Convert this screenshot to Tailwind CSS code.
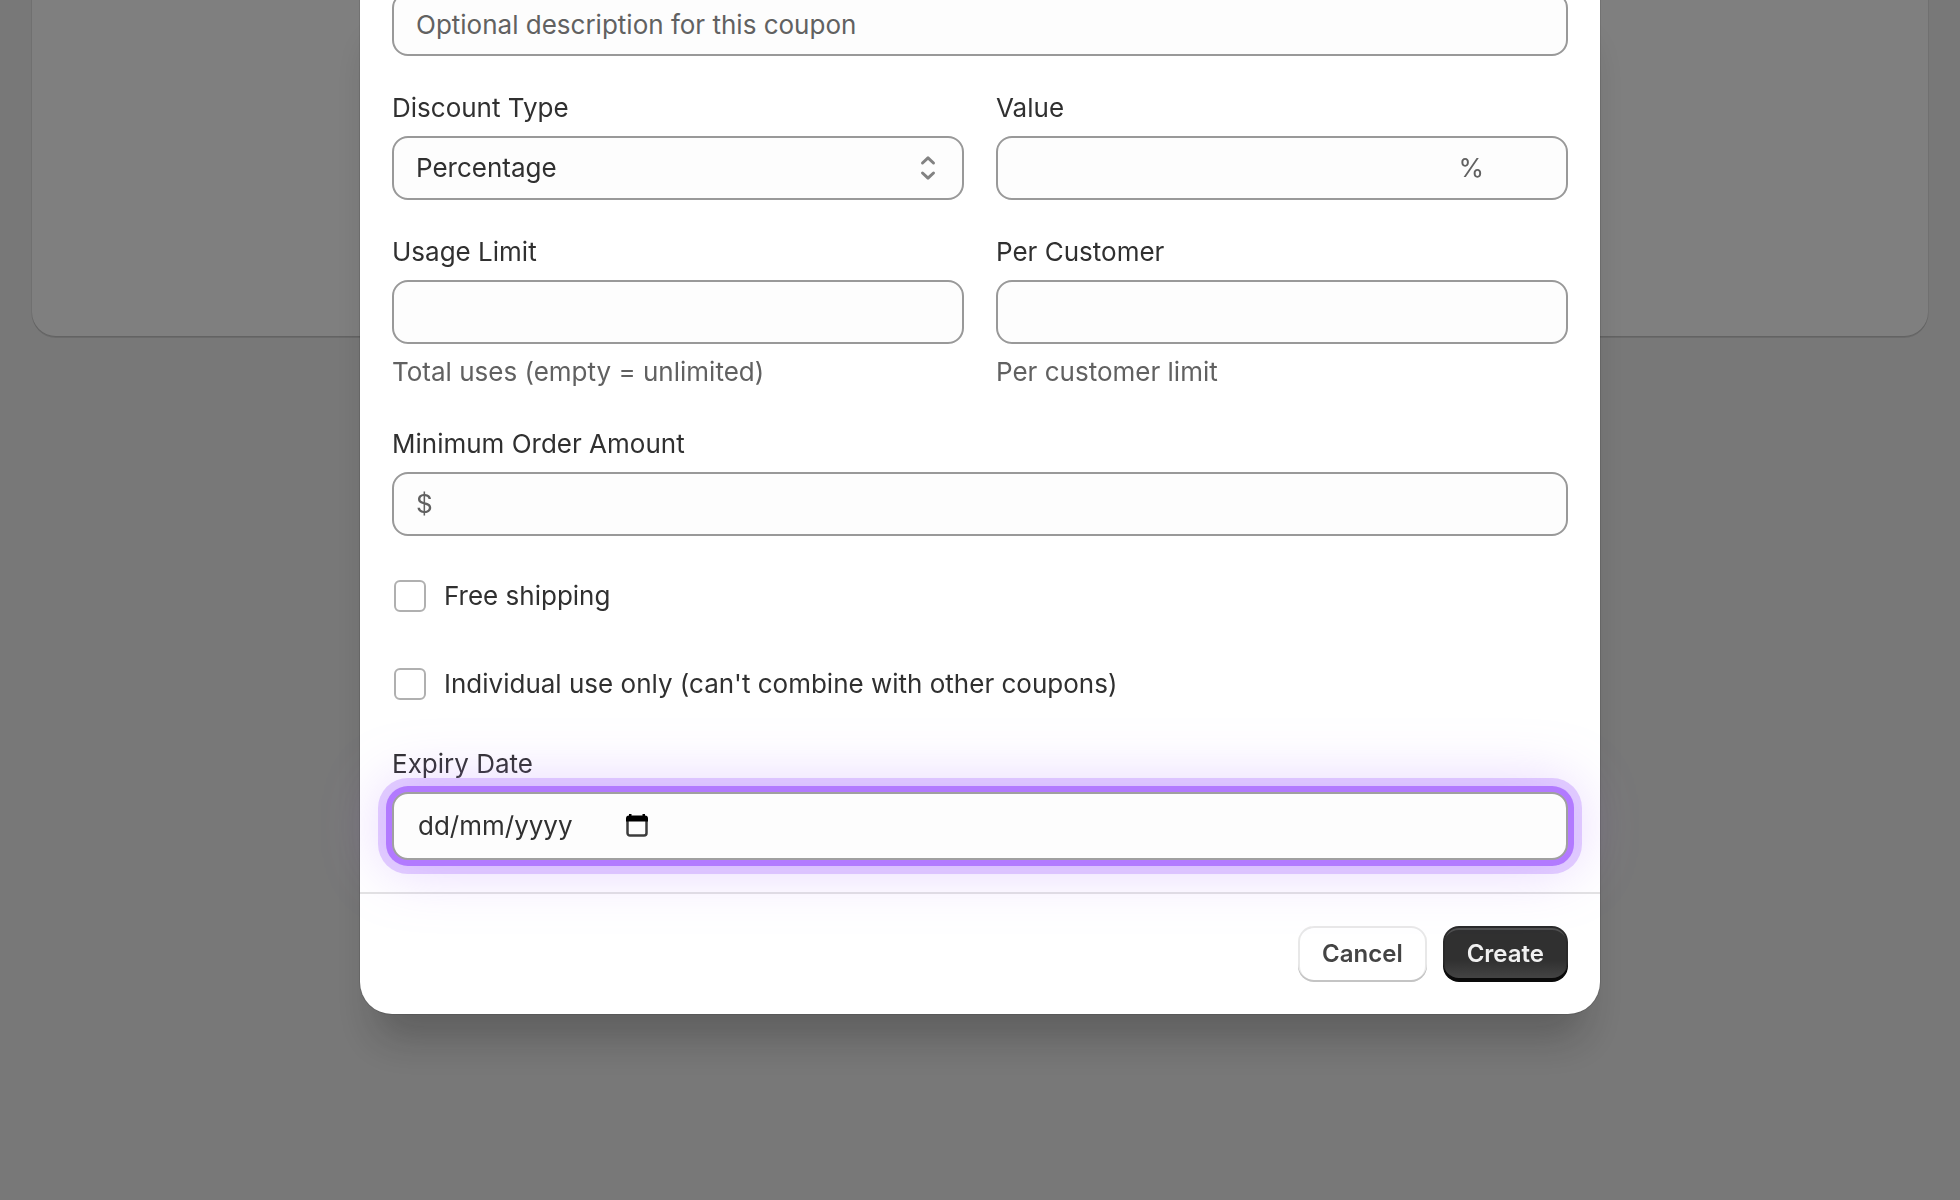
<!DOCTYPE html>
<html lang="en-GB">
  <head>
    <meta charset="UTF-8" />
    <meta name="viewport" content="width=device-width, initial-scale=1.0" />
    <title>Create coupon</title>
    <script src="https://cdn.jsdelivr.net/npm/@tailwindcss/browser@4"></script>
  </head>
  <body class="min-h-screen overflow-hidden bg-[#f1f1f1] font-['Inter',sans-serif] text-[26px] leading-10 text-[#303030]">
    <!-- Page behind the dialog -->
    <main class="px-8">
      <div class="h-84 rounded-b-3xl bg-white shadow-[0_2px_0_0_rgba(26,26,26,0.12),0_0_0_1px_rgba(26,26,26,0.08)]"></div>
    </main>

    <!-- Dialog -->
    <div class="fixed inset-0 flex items-start justify-center bg-black/50">
      <form class="-mt-2 w-full max-w-[1240px] rounded-b-[32px] bg-white shadow-[0_0_0_1px_rgba(26,26,26,0.13),0_40px_40px_-16px_rgba(26,26,26,0.28)]">
        <div class="flex flex-col gap-8 px-8 pb-8">
          <input type="text" aria-label="Description" placeholder="Optional description for this coupon" class="h-16 w-full rounded-2xl border-2 border-[#999] bg-[#fdfdfd] px-[22px] placeholder:text-[#616161]" />

          <div class="grid grid-cols-2 gap-8">
            <div class="flex flex-col gap-2">
              <label for="type">Discount Type</label>
              <div class="relative">
                <select id="type" class="h-16 w-full appearance-none rounded-2xl border-2 border-[#999] bg-[#fdfdfd] px-[22px]">
                  <option>Percentage</option>
                  <option>Fixed amount</option>
                </select>
                <svg class="pointer-events-none absolute top-3 right-4 size-10" viewBox="0 0 20 20" fill="none" stroke="#828282" stroke-width="1.5" stroke-linecap="round" stroke-linejoin="round">
                  <path d="M7.25 7.5 10 4.9l2.75 2.6M7.25 12.5 10 15.1l2.75-2.6" />
                </svg>
              </div>
            </div>
            <div class="flex flex-col gap-2">
              <label for="value">Value</label>
              <div class="flex h-16 items-center rounded-2xl border-2 border-[#999] bg-[#fdfdfd] pr-[82px] pl-[22px]">
                <input id="value" type="text" inputmode="decimal" class="min-w-0 flex-1 outline-none" />
                <span class="text-[#616161]">%</span>
              </div>
            </div>
          </div>

          <div class="grid grid-cols-2 gap-8">
            <div class="flex flex-col gap-2">
              <label for="usage">Usage Limit</label>
              <input id="usage" type="text" inputmode="numeric" class="h-16 w-full rounded-2xl border-2 border-[#999] bg-[#fdfdfd] px-[22px]" />
              <p class="text-[#616161]">Total uses (empty = unlimited)</p>
            </div>
            <div class="flex flex-col gap-2">
              <label for="customer">Per Customer</label>
              <input id="customer" type="text" inputmode="numeric" class="h-16 w-full rounded-2xl border-2 border-[#999] bg-[#fdfdfd] px-[22px]" />
              <p class="text-[#616161]">Per customer limit</p>
            </div>
          </div>

          <div class="flex flex-col gap-2">
            <label for="minimum">Minimum Order Amount</label>
            <div class="flex h-16 items-center gap-2 rounded-2xl border-2 border-[#999] bg-[#fdfdfd] px-[22px]">
              <span class="text-[#616161]">$</span>
              <input id="minimum" type="text" inputmode="decimal" class="min-w-0 flex-1 outline-none" />
            </div>
          </div>

          <label class="flex items-center gap-4 py-2">
            <input type="checkbox" class="mx-0.5 size-8 appearance-none rounded-md border-2 border-[#b0b0b0] bg-white" />
            Free shipping
          </label>
          <label class="flex items-center gap-4 py-2">
            <input type="checkbox" class="mx-0.5 size-8 appearance-none rounded-md border-2 border-[#b0b0b0] bg-white" />
            Individual use only (can't combine with other coupons)
          </label>

          <div class="flex flex-col gap-2">
            <label for="expiry">Expiry Date</label>
            <div class="relative z-10 flex h-[68px] items-center rounded-2xl border-2 border-[#a0a0a0] bg-[#fdfdfd] px-6 shadow-[0_0_0_6px_#b27aff,0_0_0_14px_rgba(178,122,255,0.35),0_0_60px_8px_rgba(178,122,255,0.35)]">
              <input id="expiry" type="text" placeholder="dd/mm/yyyy" class="w-52 outline-none placeholder:text-[#303030]" />
              <button type="button" aria-label="Open calendar">
                <svg class="block h-6 w-[22px]" viewBox="0 0 22 24" fill="none">
                  <path d="M1.5 7v12a2.5 2.5 0 0 0 2.5 2.5h14a2.5 2.5 0 0 0 2.5-2.5V7" stroke="#3c3c3c" stroke-width="2.5" />
                  <path d="M0 7.500V4.500a3 3 0 0 1 3-3V0h2.500v1.500h11V0H19v1.500a3 3 0 0 1 3 3v3z" fill="#000" />
                </svg>
              </button>
            </div>
          </div>
        </div>

        <div class="flex justify-end gap-4 border-t-2 border-[#e3e3e3] px-8 py-8 text-2xl leading-10 font-semibold">
          <button type="button" class="h-14 rounded-2xl bg-white px-6 text-[#444] shadow-[inset_0_-2px_0_0_#c4c4c4,inset_0_0_0_2px_rgba(0,0,0,0.09)]">Cancel</button>
          <button type="submit" class="h-14 rounded-2xl bg-[#303030] bg-linear-to-b from-[#303030] from-60% to-[#484848] px-6 text-[#f0f0f0] shadow-[inset_0_-4px_0_0_#0a0a0a,inset_0_0_0_2px_#2a2a2a,inset_0_4px_0_0_#505050]">Create</button>
        </div>
      </form>
    </div>
  </body>
</html>
